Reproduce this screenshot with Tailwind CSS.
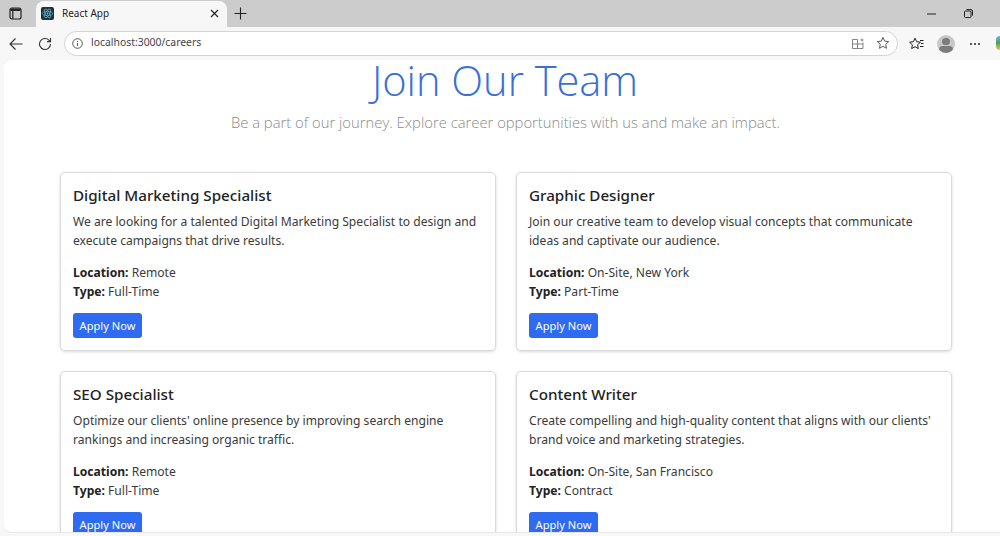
<!DOCTYPE html>
<html>
<head>
<meta charset="utf-8">
<script src="https://cdn.jsdelivr.net/npm/@tailwindcss/browser@4"></script>
</head>
<body class="w-[1000px] h-[536px] overflow-hidden bg-[#f7f7f7] font-['Noto_Sans',sans-serif] flex flex-col">
  <div class="h-[27px] bg-[#cccccc] flex items-end shrink-0 text-[#333]">
    <div class="w-[36px] h-[27px] flex items-center justify-start pl-[9px]">
      <svg width="13" height="13" viewBox="0 0 13 13" fill="none" stroke="#222" stroke-width="1.2"><rect x="1" y="1" width="11" height="11" rx="2"/><rect x="1.500" y="1.500" width="10" height="2.500" fill="#222" stroke="none"/><path d="M3.800 4v8"/></svg>
    </div>
    <div class="w-[191px] h-[26px] bg-[#f7f7f7] rounded-t-lg flex items-center pl-[5px] pr-[8px] pb-[1px]">
      <div class="w-[13px] h-[13px] bg-[#1f3038] rounded-[2px] flex items-center justify-center">
        <svg width="11" height="11" viewBox="0 0 24 24" fill="none" stroke="#5cc4e0" stroke-width="1.4"><ellipse cx="12" cy="12" rx="11" ry="4.5"/><ellipse cx="12" cy="12" rx="11" ry="4.5" transform="rotate(60 12 12)"/><ellipse cx="12" cy="12" rx="11" ry="4.5" transform="rotate(120 12 12)"/><circle cx="12" cy="12" r="2" fill="#5cc4e0" stroke="none"/></svg>
      </div>
      <span class="ml-[8px] text-[10px] text-[#222]">React App</span>
      <svg class="ml-auto" width="9" height="9" viewBox="0 0 9 9" stroke="#222" stroke-width="1.2"><path d="M1 1l7 7M8 1l-7 7"/></svg>
    </div>
    <div class="w-[26px] h-[27px] flex items-center justify-center">
      <svg width="13" height="13" viewBox="0 0 13 13" stroke="#222" stroke-width="1.1"><path d="M6.5 0.5v12M0.5 6.5h12"/></svg>
    </div>
    <div class="ml-auto h-[27px] flex items-center">
      <svg class="mr-[28px]" width="9" height="2" viewBox="0 0 9 2" stroke="#222" stroke-width="1"><path d="M0 1h9"/></svg>
      <svg class="mr-[27px]" width="9" height="9" viewBox="0 0 9 9" fill="none" stroke="#222" stroke-width="1"><rect x="0.5" y="2" width="6.5" height="6.5" rx="1"/><path d="M2.5 0.6h4.5a1.5 1.5 0 0 1 1.5 1.5v4.5"/></svg>
    </div>
  </div>
  <div class="h-[33px] flex items-center shrink-0 relative">
    <svg class="ml-[9px]" width="14" height="14" viewBox="0 0 14 14" fill="none" stroke="#333" stroke-width="1.1"><path d="M13.5 7H1M6.5 1.5L1 7l5.500 5.500"/></svg>
    <svg class="ml-[15px]" width="14" height="14" viewBox="0 0 14 14" fill="none" stroke="#333" stroke-width="1.1"><path d="M12.500 7a5.500 5.500 0 1 1-1.600-3.900L12.500 4.600M12.500 1v3.600H9"/></svg>
    <div class="ml-[12px] mt-[-1px] w-[834px] h-[25px] bg-white rounded-full border border-[#d4d4d4] flex items-center pl-[7px]">
      <svg width="11" height="11" viewBox="0 0 11 11" fill="none" stroke="#444" stroke-width="0.9"><circle cx="5.500" cy="5.500" r="4.800"/><path d="M5.500 5v3M5.500 3v1"/></svg>
      <span class="ml-[8px] text-[10.400px] text-[#444]">localhost:3000/careers</span>
      <svg class="ml-auto mr-[12px]" width="12" height="12" viewBox="0 0 12 12" fill="none" stroke="#777" stroke-width="0.9"><path d="M0.500 2.500h5v9h-5zM0.500 7h10.500v4.500h-5.500M8.500 3h3M10 1.500v3M11 5.500v1.500"/></svg>
      <svg class="mr-[7px]" width="14" height="14" viewBox="0 0 24 24" fill="none" stroke="#444" stroke-width="1.500"><path d="M12 2.500l2.900 6.300 6.800.8-5 4.700 1.300 6.800-6-3.400-6 3.400 1.300-6.800-5-4.700 6.800-.8z"/></svg>
    </div>
    <svg class="ml-[11px]" width="15" height="14" viewBox="0 0 15 14" fill="none" stroke="#222" stroke-width="1"><path d="M6 1.200l1.600 3.500 3.800.5-2.800 2.600.7 3.800L6 9.700l-3.300 1.900.7-3.800L.6 5.200l3.800-.5zM11 3.500h3.500M12 6.500h2.500M11 9.500h3.500"/></svg>
    <div class="ml-[13px] w-[18px] h-[18px] rounded-full bg-[#c8c8c8] overflow-hidden flex flex-col items-center">
      <div class="mt-[3px] w-[8px] h-[8px] rounded-full bg-[#7c7c7c]"></div>
      <div class="mt-[1px] w-[14px] h-[8px] rounded-full bg-[#7c7c7c]"></div>
    </div>
    <span class="ml-[15px] flex gap-[2px]">
      <i class="w-[2px] h-[2px] rounded-full bg-[#222]"></i><i class="w-[2px] h-[2px] rounded-full bg-[#222]"></i><i class="w-[2px] h-[2px] rounded-full bg-[#222]"></i>
    </span>
    <div class="absolute right-0 top-[9px] w-[4px] h-[14px] bg-gradient-to-b from-[#5fb8e8] via-[#4aa05a] to-[#e8c840] rounded-l-full"></div>
  </div>
  <main class="ml-[4px] h-[473px] bg-white rounded-tl-[8px] rounded-bl-[8px] border-b border-[#e8e8e8] shrink-0 flex flex-col items-center">
    <h1 class="ml-[6px] h-[40px] leading-[40px] text-[41.600px] font-light text-[#3b6fd8] font-['Open_Sans',sans-serif]">Join Our Team</h1>
    <p class="mt-[11px] ml-[7px] h-[22px] leading-[22px] text-[14.800px] font-light text-[#8a8a8a] font-['Open_Sans',sans-serif]">Be a part of our journey. Explore career opportunities with us and make an impact.</p>
    <div class="mt-[35px] ml-[8px] w-[900px] h-[364px] overflow-hidden px-[4px] pt-[4px]">
      <div class="grid grid-cols-[436px_436px] gap-x-[20px] gap-y-[20px]">
        <article class="h-[179px] rounded-[5px] border border-[#dadada] shadow-[0_1px_3px_rgba(0,0,0,0.15)] px-[12px] pt-[12px] text-[12.100px] leading-[19px] text-[#3a3a3a]">
          <h2 class="text-[15.200px] leading-[20px] font-medium text-[#222]">Digital Marketing Specialist</h2>
          <p class="mt-[7px]">We are looking for a talented Digital Marketing Specialist to design and execute campaigns that drive results.</p>
          <p class="mt-[13px]"><b class="font-bold text-[#222]">Location:</b> Remote</p>
          <p><b class="font-bold text-[#222]">Type:</b> Full-Time</p>
          <button class="mt-[12px] w-[69px] h-[25px] rounded-[3px] bg-[#2f6bf0] text-white text-[11.100px]">Apply Now</button>
        </article>
        <article class="h-[179px] rounded-[5px] border border-[#dadada] shadow-[0_1px_3px_rgba(0,0,0,0.15)] px-[12px] pt-[12px] text-[12.100px] leading-[19px] text-[#3a3a3a]">
          <h2 class="text-[15.200px] leading-[20px] font-medium text-[#222]">Graphic Designer</h2>
          <p class="mt-[7px]">Join our creative team to develop visual concepts that communicate ideas and captivate our audience.</p>
          <p class="mt-[13px]"><b class="font-bold text-[#222]">Location:</b> On-Site, New York</p>
          <p><b class="font-bold text-[#222]">Type:</b> Part-Time</p>
          <button class="mt-[12px] w-[69px] h-[25px] rounded-[3px] bg-[#2f6bf0] text-white text-[11.100px]">Apply Now</button>
        </article>
        <article class="h-[179px] rounded-[5px] border border-[#dadada] shadow-[0_1px_3px_rgba(0,0,0,0.15)] px-[12px] pt-[12px] text-[12.100px] leading-[19px] text-[#3a3a3a]">
          <h2 class="text-[15.200px] leading-[20px] font-medium text-[#222]">SEO Specialist</h2>
          <p class="mt-[7px]">Optimize our clients' online presence by improving search engine rankings and increasing organic traffic.</p>
          <p class="mt-[13px]"><b class="font-bold text-[#222]">Location:</b> Remote</p>
          <p><b class="font-bold text-[#222]">Type:</b> Full-Time</p>
          <button class="mt-[12px] w-[69px] h-[25px] rounded-[3px] bg-[#2f6bf0] text-white text-[11.100px]">Apply Now</button>
        </article>
        <article class="h-[179px] rounded-[5px] border border-[#dadada] shadow-[0_1px_3px_rgba(0,0,0,0.15)] px-[12px] pt-[12px] text-[12.100px] leading-[19px] text-[#3a3a3a]">
          <h2 class="text-[15.200px] leading-[20px] font-medium text-[#222]">Content Writer</h2>
          <p class="mt-[7px]">Create compelling and high-quality content that aligns with our clients' brand voice and marketing strategies.</p>
          <p class="mt-[13px]"><b class="font-bold text-[#222]">Location:</b> On-Site, San Francisco</p>
          <p><b class="font-bold text-[#222]">Type:</b> Contract</p>
          <button class="mt-[12px] w-[69px] h-[25px] rounded-[3px] bg-[#2f6bf0] text-white text-[11.100px]">Apply Now</button>
        </article>
      </div>
    </div>
  </main>
</body>
</html>
